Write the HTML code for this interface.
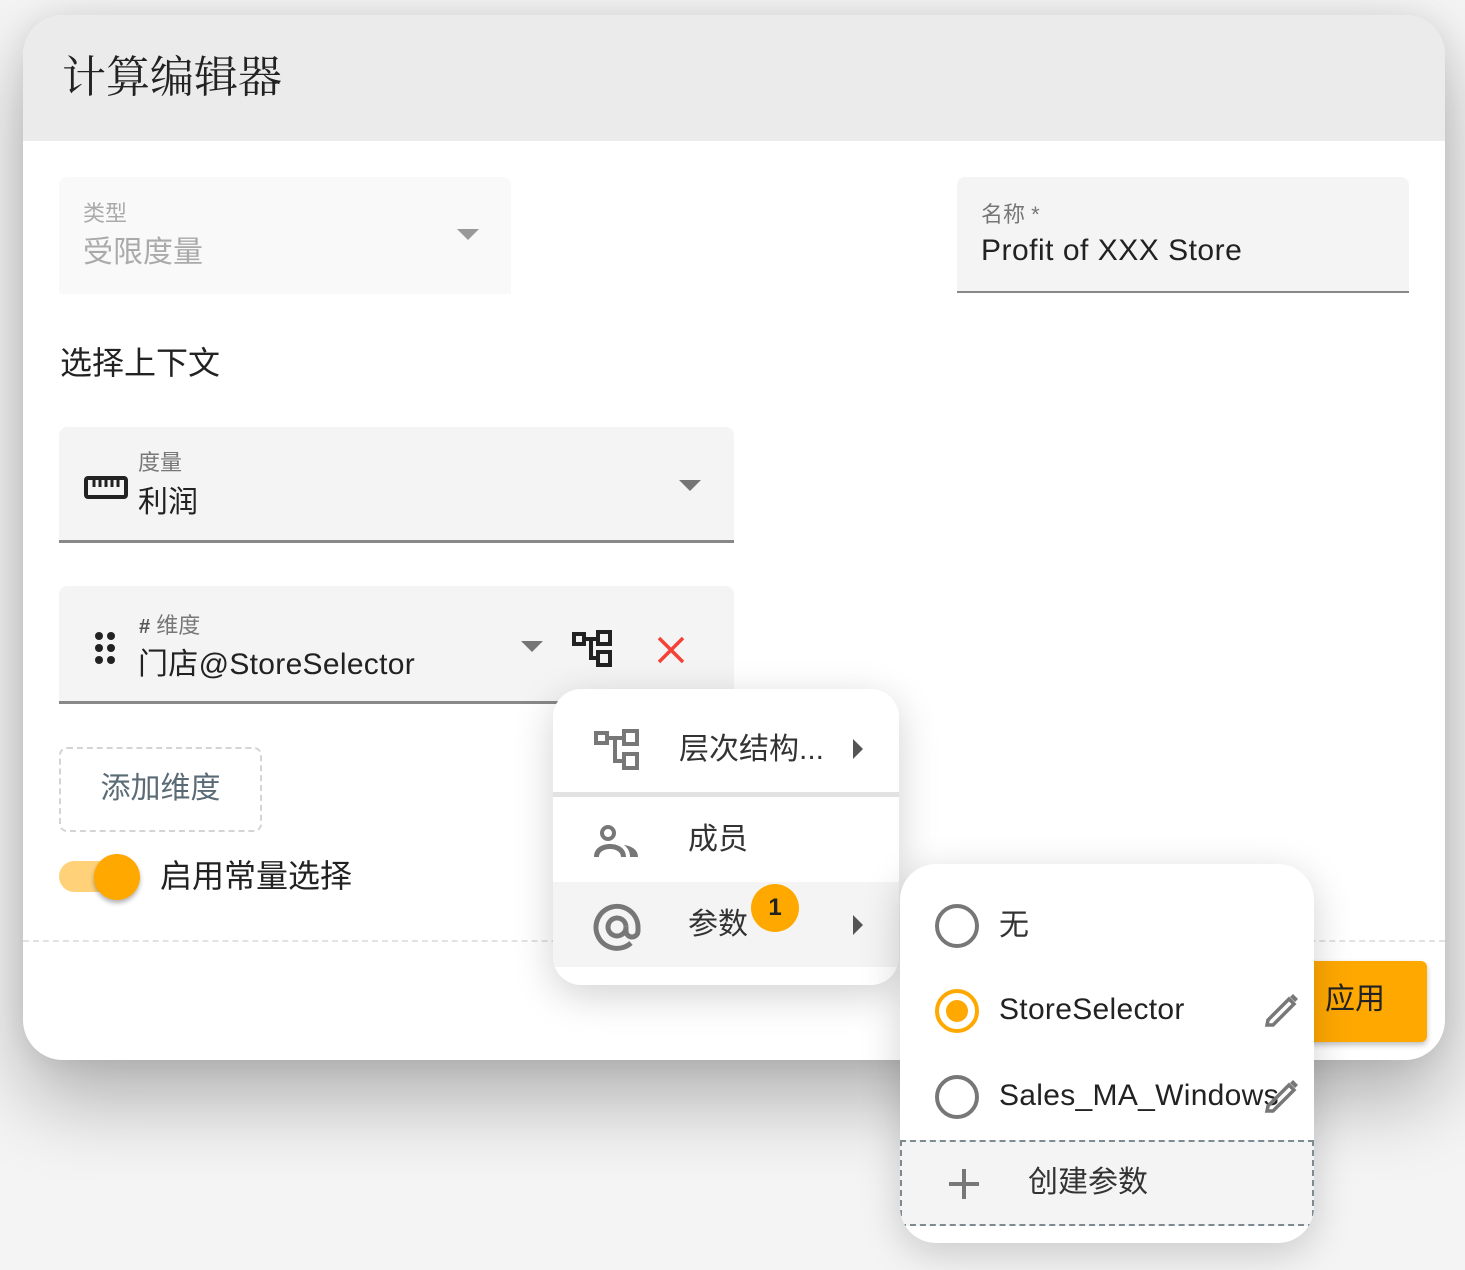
<!DOCTYPE html><html><head><meta charset="utf-8"><style>
*{box-sizing:border-box;margin:0;padding:0}
body{width:1465px;height:1270px;background:#f4f4f4;font-family:"Liberation Sans","Noto Sans CJK SC",sans-serif;position:relative;overflow:hidden;color:#222}
.a{position:absolute}
.dlg{left:23px;top:15px;width:1422px;height:1045px;border-radius:40px;background:#fff;box-shadow:0 40px 80px rgba(0,0,0,.28),0 0 30px rgba(0,0,0,.08);overflow:hidden}
.hdr{left:0;top:0;width:1422px;height:126px;background:#ebebeb}
.fld{background:#f4f4f4;border-radius:8px 8px 0 0}
.lbl{font-size:22px;color:#777;white-space:nowrap}
.val{font-size:30px;color:#222;white-space:nowrap}
.tri{width:0;height:0;border-left:11px solid transparent;border-right:11px solid transparent;border-top:11px solid #757575}
.menu{background:#fff;box-shadow:0 10px 40px rgba(0,0,0,.18)}
.mt{font-size:30px;color:#333;white-space:nowrap}
.rt{width:0;height:0;border-top:10px solid transparent;border-bottom:10px solid transparent;border-left:10px solid #555}
.rad{width:44px;height:44px;border-radius:50%;border:4px solid #777}
</style></head><body>
<div class="a dlg">
 <div class="a hdr"></div>
 <div class="a" style="left:39px;top:26px;font-size:44px;color:#222;font-family:'Noto Serif CJK SC',serif">计算编辑器</div>
 <div class="a fld" style="left:36px;top:162px;width:452px;height:117px;background:#f9f9f9"></div>
 <div class="a lbl" style="left:60px;top:181px;color:#aaa">类型</div>
 <div class="a val" style="left:60px;top:212px;color:#aaa">受限度量</div>
 <div class="a tri" style="left:434px;top:214px;border-top-color:#999"></div>
 <div class="a fld" style="left:934px;top:162px;width:452px;height:116px;border-bottom:2px solid #888"></div>
 <div class="a lbl" style="left:958px;top:182px">名称 *</div>
 <div class="a val" style="left:958px;top:219px;letter-spacing:.5px">Profit of XXX Store</div>
 <div class="a" style="left:37px;top:323px;font-size:32px;color:#222">选择上下文</div>
 <div class="a fld" style="left:36px;top:412px;width:675px;height:116px;border-bottom:3px solid #888"></div>
 <svg class="a" style="left:61px;top:461px" width="44" height="24"><rect x="2" y="2" width="40" height="19" rx="2" fill="none" stroke="#222" stroke-width="4"/><path d="M10 4v7M16 4v7M22 4v7M28 4v7M34 4v7" stroke="#222" stroke-width="3"/></svg>
 <div class="a lbl" style="left:115px;top:430px">度量</div>
 <div class="a val" style="left:115px;top:462px">利润</div>
 <div class="a tri" style="left:656px;top:465px"></div>
 <div class="a fld" style="left:36px;top:571px;width:675px;height:118px;border-bottom:3px solid #888"></div>
 <svg class="a" style="left:71px;top:616px" width="24" height="36"><g fill="#222"><circle cx="5" cy="5" r="4"/><circle cx="17" cy="5" r="4"/><circle cx="5" cy="17" r="4"/><circle cx="17" cy="17" r="4"/><circle cx="5" cy="29" r="4"/><circle cx="17" cy="29" r="4"/></g></svg>
 <div class="a lbl" style="left:116px;top:593px"><b style="color:#555;font-size:20px">#</b> 维度</div>
 <div class="a val" style="left:115px;top:624px;letter-spacing:.3px">门店@StoreSelector</div>
 <div class="a tri" style="left:498px;top:626px"></div>
 <svg class="a" style="left:549px;top:615px" width="42" height="38"><g fill="none" stroke="#222" stroke-width="4"><rect x="2" y="4" width="10" height="10"/><rect x="26" y="2" width="12" height="12"/><rect x="26" y="22" width="12" height="13"/><path d="M12 9h14M19 9v19h7"/></g></svg>
 <svg class="a" style="left:633px;top:620px" width="30" height="30"><path d="M3 3L27 27M27 3L3 27" stroke="#f44336" stroke-width="3.5"/></svg>
 <div class="a" style="left:36px;top:732px;width:203px;height:85px;border:2px dashed #d4d4d4;border-radius:8px;font-size:30px;color:#5a6b76;text-align:center;line-height:80px">添加维度</div>
 <div class="a" style="left:36px;top:846px;width:62px;height:31px;border-radius:16px;background:#ffd27a"></div>
 <div class="a" style="left:71px;top:839px;width:46px;height:46px;border-radius:50%;background:#ffa800;box-shadow:0 3px 5px rgba(0,0,0,.3)"></div>
 <div class="a" style="left:137px;top:836px;font-size:32px;color:#222">启用常量选择</div>
 <div class="a" style="left:0;top:925px;width:1422px;border-top:2px dashed #e2e2e2"></div>
 <div class="a" style="left:1270px;top:946px;width:134px;height:81px;background:#ffa800;border-radius:6px;box-shadow:0 3px 6px rgba(0,0,0,.25);font-size:30px;line-height:78px;padding-left:32px;color:#222">应用</div>
</div>
<div class="a menu" style="left:553px;top:689px;width:346px;height:296px;border-radius:28px;overflow:hidden">
 <div class="a" style="left:0;top:103px;width:346px;height:5px;background:#e2e2e2"></div>
 <div class="a" style="left:0;top:193px;width:346px;height:85px;background:#f4f4f4"></div>
 <svg class="a" style="left:41px;top:40px" width="46" height="42"><g fill="none" stroke="#777" stroke-width="4"><rect x="2" y="4" width="11" height="10"/><rect x="30" y="2" width="13" height="13"/><rect x="30" y="25" width="13" height="14"/><path d="M13 9h17M21 9v23h9"/></g></svg>
 <div class="a mt" style="left:126px;top:35px">层次结构...</div>
 <div class="a rt" style="left:300px;top:50px"></div>
 <svg class="a" style="left:41px;top:135px" width="46" height="34"><g fill="#777"><circle cx="14" cy="9" r="6" fill="none" stroke="#777" stroke-width="4"/><path d="M28 3a8 8 0 0 1 0 14a8 8 0 0 0 0-14z"/><path d="M0 33c0-9 8-13 16-13s16 4 16 13h-5c0-5-5-8-11-8s-11 3-11 8z"/><path d="M30 21c8 1 14 5 14 12h-8c0-5-2-9-6-12z"/></g></svg>
 <div class="a mt" style="left:135px;top:125px">成员</div>
 <svg class="a" style="left:40px;top:214px" width="48" height="48"><path d="M38 40A21 21 0 1 1 45 24v4a6 6 0 0 1-12 0V24M33 24a9 9 0 1 1 0-.1" fill="none" stroke="#777" stroke-width="5"/></svg>
 <div class="a mt" style="left:135px;top:210px">参数</div>
 <div class="a rt" style="left:300px;top:226px"></div>
 <div class="a" style="left:198px;top:195px;width:48px;height:48px;border-radius:50%;background:#ffa800;text-align:center;line-height:48px;font-weight:bold;font-size:24px;color:#222">1</div>
</div>
<div class="a menu" style="left:900px;top:864px;width:414px;height:379px;border-radius:36px;overflow:hidden">
 <div class="a rad" style="left:35px;top:40px"></div>
 <div class="a mt" style="left:99px;top:36px">无</div>
 <div class="a rad" style="left:35px;top:125px;border-color:#ffa800"></div>
 <div class="a" style="left:46px;top:136px;width:22px;height:22px;border-radius:50%;background:#ffa800"></div>
 <div class="a mt" style="left:99px;top:129px;color:#222;letter-spacing:.3px">StoreSelector</div>
 <svg class="a" style="left:362px;top:128px" width="38" height="38"><path d="M6 28L27 7l5 5L11 33H5z" fill="none" stroke="#777" stroke-width="3.5"/><path d="M28 5l3-3 5 5-3 3z" fill="#777"/></svg>
 <div class="a rad" style="left:35px;top:211px"></div>
 <div class="a mt" style="left:99px;top:215px;color:#222;letter-spacing:.3px">Sales_MA_Windows</div>
 <svg class="a" style="left:362px;top:214px" width="38" height="38"><path d="M6 28L27 7l5 5L11 33H5z" fill="none" stroke="#777" stroke-width="3.5"/><path d="M28 5l3-3 5 5-3 3z" fill="#777"/></svg>
 <div class="a" style="left:0;top:276px;width:414px;height:86px;background:#f4f4f4;border:2px dashed #7d8a92"></div>
 <svg class="a" style="left:47px;top:303px" width="34" height="34"><path d="M17 2v30M2 17h30" stroke="#777" stroke-width="4"/></svg>
 <div class="a mt" style="left:128px;top:293px">创建参数</div>
</div>
</body></html>
